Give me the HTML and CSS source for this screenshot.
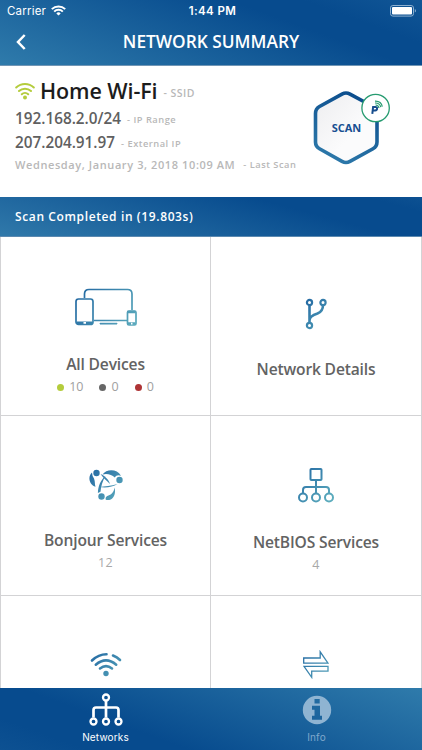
FILE: index.html
```
<!DOCTYPE html>
<html lang="en">
  <head>
    <meta charset="UTF-8" />
    <meta name="viewport" content="width=device-width, initial-scale=1.0" />
    <title>Network Summary</title>
    <link rel="stylesheet" href="styles.css">
  </head>
  <body>
    <!-- Shared icon gradient -->
    <svg class="defs" width="0" height="0">
      <defs>
        <linearGradient id="blue" x1="0" y1="0" x2="62" y2="40" gradientUnits="userSpaceOnUse">
          <stop offset="0" stop-color="#1f64a0" />
          <stop offset="1" stop-color="#5cacbd" />
        </linearGradient>
        <linearGradient id="blueSmall" x1="0" y1="0" x2="32" y2="32" gradientUnits="userSpaceOnUse">
          <stop offset="0" stop-color="#2267a2" />
          <stop offset="1" stop-color="#5cacbd" />
        </linearGradient>
        <linearGradient id="hex" x1="0.7" y1="0" x2="0.3" y2="1">
          <stop offset="0" stop-color="#0b4c8c" />
          <stop offset="1" stop-color="#2d79aa" />
        </linearGradient>
        <linearGradient id="hexFill" x1="0" y1="0" x2="1" y2="1">
          <stop offset="0" stop-color="#ededef" />
          <stop offset="0.6" stop-color="#fbfbfc" />
        </linearGradient>
      </defs>
    </svg>

    <header class="header">
      <div class="status">
        <div class="carrier">
          <span>Carrier</span>
          <svg width="15" height="11" viewBox="0 0 15 11" fill="none" stroke="#fff" stroke-width="2">
            <path d="M.8 4.1a9.6 9.6 0 0 1 13.4 0M3.2 6.6a6.1 6.1 0 0 1 8.6 0" />
            <path d="M7.5 10.6 5.3 8.4a3.2 3.2 0 0 1 4.4 0z" fill="#fff" stroke="none" />
          </svg>
        </div>
        <div class="clock">1:44 PM</div>
        <svg class="battery" width="26" height="12" viewBox="0 0 26 12">
          <rect x=".5" y=".5" width="23" height="10.6" rx="2.4" fill="none" stroke="#8db0d0" />
          <rect x="2" y="2" width="20" height="7.6" rx="1" fill="#fff" />
          <path d="M24.8 4v3.6q1.2-.6 1.2-1.8t-1.2-1.8z" fill="#8db0d0" />
        </svg>
      </div>
      <div class="navbar">
        <svg class="back" width="10" height="16" viewBox="0 0 10 16" fill="none" stroke="#fff" stroke-width="2.5">
          <path d="M8.7 1 2 8l6.7 7" />
        </svg>
        <h1>NETWORK SUMMARY</h1>
      </div>
    </header>

    <section class="summary">
      <div class="facts">
        <div class="ssid">
          <svg width="20" height="18" viewBox="0 0 20 18" fill="none" stroke="#b4cc3c" stroke-width="2" stroke-linecap="round">
            <path d="M1.2 5.5a12.8 12.8 0 0 1 17.6 0M4 9a8.8 8.8 0 0 1 12 0M6.8 12.3a4.7 4.7 0 0 1 6.4 0" />
            <circle cx="10" cy="15.5" r="2" fill="#b4cc3c" stroke="none" />
          </svg>
          <strong>Home Wi-Fi</strong>
          <small>- SSID</small>
        </div>
        <div class="address"><b>192.168.2.0/24</b><small>- IP Range</small></div>
        <div class="address"><b>207.204.91.97</b><small>- External IP</small></div>
        <div class="last-scan"><b>Wednesday, January 3, 2018 10:09 AM</b><small>- Last Scan</small></div>
      </div>
      <div class="scan">
        <svg width="78" height="74" viewBox="0 0 78 74">
          <path d="M29 3.1q4-2.2 8 0L60 15.500q4 2.300 4 7V51q0 4.500-4 6.800L37 70.400q-4 2.200-8 0L6.500 57.800q-4-2.300-4-6.800V22.500q0-4.700 4-7z" fill="url(#hexFill)" stroke="url(#hex)" stroke-width="3.600" />
          <circle cx="62.600" cy="17" r="13.700" fill="#fff" stroke="#269b70" stroke-width="1.300" />
          <path d="M59.300 22.800l.8-6.800h2q2-.2 2 1.500t-2 2h-2" fill="none" stroke="#174d8d" stroke-width="2" />
          <path d="M62.500 14q2.900-.2 3.500 3M62 12q4.800-.3 5.800 4.200M62 10.200q6.300-.2 7.300 5.500" fill="none" stroke="#269b70" stroke-width="1.200" />
        </svg>
        <span>SCAN</span>
      </div>
    </section>

    <div class="result">Scan Completed in (19.803s)</div>

    <main class="grid">
      <div class="cell devices">
        <svg width="62" height="38" viewBox="0 0 62 38" fill="none" stroke="url(#blue)" stroke-width="1.700">
          <path d="M9.500 10V6q0-4.500 4.500-4.500h38.500q4.500 0 4.500 4.500v16M19 32.500h33" />
          <rect x="1" y="11" width="17" height="25.500" rx="2.500" />
          <path d="M1.500 34.800h16M52.500 35.600h8M52.500 24h8" stroke-width="2.500" />
          <rect x="52.500" y="23" width="8.500" height="14" rx="1.500" />
          <path d="M25 35.300h17v.7H25z" fill="url(#blue)" stroke-width="1" />
          <path d="M8.500 34.800h2.500M56 35.600h1.500" stroke="#fff" />
        </svg>
        <h2>All Devices</h2>
        <div class="counts">
          <span><i class="dot online"></i>10</span>
          <span><i class="dot offline"></i>0</span>
          <span><i class="dot blocked"></i>0</span>
        </div>
      </div>

      <div class="cell details">
        <svg width="22" height="32" viewBox="0 0 22 32" fill="none" stroke="url(#blueSmall)" stroke-width="2.200">
          <circle cx="4.500" cy="4.500" r="2.600" />
          <circle cx="18" cy="4.500" r="2.600" />
          <circle cx="4.500" cy="27.500" r="2.600" />
          <path d="M4.500 7v18M18 7.200q0 6-5.500 8.300-8 2.500-8 7" stroke-width="2.600" />
        </svg>
        <h2>Network Details</h2>
      </div>

      <div class="cell bonjour">
        <svg width="34" height="32" viewBox="0 0 34 32" fill="url(#blueSmall)">
          <circle cx="7.500" cy="4" r="3.200" />
          <circle cx="30.500" cy="11" r="3.200" />
          <circle cx="12.500" cy="27.500" r="3.200" />
          <path d="M3 3.500C-1.500 7.500 0 15.500 6.500 17.800 5.500 15.200 6.300 12.500 5 9.500Q3.200 7.500 3 3.500z" />
          <path d="M13.500 5.500C17.500-.3 28-.5 32 6.800c-3-1.200-4.800-.5-6.200 1.700-3-2.800-7.800-4.500-12.300-3z" />
          <path d="M25.500 18.500c-.5 4.500-3 7-6 8-2.400.8-3.300 2.200-2.700 4.300C23.500 32.500 27.500 25.500 25.500 18.500z" />
          <path d="M11.500 5C16 7 20 11 21 15 18 11.500 14.500 9.800 11.500 5z" />
          <path d="M28.500 15C24 18.200 16.500 19 10.500 18c5-1 11.500-1 18-3z" />
          <path d="M8.900 24C9 17.500 11.500 11 16.500 7c-3 5-4.500 10.500-5 15.800z" />
        </svg>
        <h2>Bonjour Services</h2>
        <p>12</p>
      </div>

      <div class="cell netbios">
        <svg width="36" height="35" viewBox="0 0 36 35" fill="none" stroke="url(#blueSmall)" stroke-width="2">
          <rect x="12.500" y="1" width="11" height="11" rx=".8" />
          <path d="M18 12v13M5 25v-3q0-3 3-3h20q3 0 3 3v3" />
          <circle cx="5" cy="29.500" r="4" />
          <circle cx="18" cy="29.500" r="4" />
          <circle cx="31" cy="29.500" r="4" />
        </svg>
        <h2>NetBIOS Services</h2>
        <p>4</p>
      </div>

      <div class="cell wifi">
        <svg width="32" height="26" viewBox="0 0 32 26" fill="none" stroke="url(#blueSmall)" stroke-width="2.600" stroke-linecap="round">
          <path d="M2 8.500Q8.500 2.200 16.500 2.200M23 3.500q4 1.500 7 4.500M5.800 12.700q10.200-8.600 20.400 0M10 16.500q6-4.600 12 0" />
          <circle cx="16" cy="21.500" r="2.700" fill="url(#blueSmall)" stroke="none" />
        </svg>
      </div>

      <div class="cell transfer">
        <svg width="26" height="29" viewBox="0 0 26 29" fill="none" stroke="url(#blueSmall)" stroke-width="1.300">
          <path d="M.7 8h16.500V1.800L25 13.200H.7zM25 16.300H1l7.700 11v-6.200H25z" />
        </svg>
      </div>
    </main>

    <nav class="tabbar">
      <div class="tab active">
        <svg width="34" height="33" viewBox="0 0 34 33" fill="none" stroke="#fff" stroke-width="2.300">
          <circle cx="17" cy="4.500" r="3" />
          <path d="M17 8v16.500M4.500 24.500V17q0-2.500 2.500-2.500h20q2.500 0 2.500 2.500v7.500" stroke-width="2.700" />
          <circle cx="4.500" cy="28.500" r="3" />
          <circle cx="17" cy="28.500" r="3" />
          <circle cx="29.500" cy="28.500" r="3" />
        </svg>
        <span>Networks</span>
      </div>
      <div class="tab">
        <svg width="30" height="30" viewBox="0 0 30 30">
          <path fill="#8fb4d2" fill-rule="evenodd" d="M15 .8a14.200 14.200 0 1 0 0 28.400 14.200 14.200 0 0 0 0-28.400zM12.500 4h5.200v4.500h-5.200zM10 10.700h8v10h2v4H10v-4h2.500v-6H10z" />
        </svg>
        <span>Info</span>
      </div>
    </nav>
  </body>
</html>
```

FILE: styles.css
```
* {
  box-sizing: border-box;
}

body {
  margin: 0;
  height: 750px;
  display: flex;
  flex-direction: column;
  overflow: hidden;
  background: #fff;
  font-family: "Open Sans", sans-serif;
}

svg {
  display: block;
  flex: none;
}

.defs {
  position: absolute;
}

h1,
h2,
p {
  margin: 0;
}

.header {
  height: 66px;
  flex: none;
  color: #fff;
  background: linear-gradient(20deg, #2f7bab 0%, #074b8e 68%, #074b8e 80%, #115696 100%);
  border-bottom: 1px solid #7196b5;
}

.status {
  height: 21px;
  display: grid;
  grid-template-columns: 1fr auto 1fr;
  align-items: center;
  padding: 0 6px 0 7px;
  font-family: Inter, sans-serif;
  font-size: 11.5px;
}

.carrier {
  display: flex;
  align-items: center;
  gap: 5px;
  letter-spacing: 0.2px;
}

.clock {
  padding-left: 2px;
  font-weight: 600;
  letter-spacing: 0.4px;
}

.battery {
  justify-self: end;
}

.navbar {
  position: relative;
  height: 42px;
  display: flex;
  align-items: center;
  justify-content: center;
}

.back {
  position: absolute;
  left: 16px;
  top: 13px;
}

h1 {
  font-size: 17.3px;
  font-weight: 600;
  letter-spacing: 0;
  line-height: 24px;
  margin-top: -1px;
}

.summary {
  height: 131px;
  flex: none;
  display: flex;
  padding: 10px 0 0 15px;
}

.facts {
  width: 298px;
  white-space: nowrap;
  color: #606060;
}

.facts b {
  font-weight: 600;
}

.facts small {
  font-size: 9.3px;
  font-weight: 600;
  letter-spacing: 0.5px;
  color: #b8b8b8;
}

.ssid {
  height: 30px;
  display: flex;
  align-items: center;
}

.ssid strong {
  margin: -1px 6px 0 5px;
  font-size: 21.5px;
  font-weight: 600;
  letter-spacing: -0.1px;
  color: #1c1c1c;
}

.facts .ssid small {
  font-size: 10.5px;
  padding-top: 3px;
}

.address {
  height: 24px;
  display: flex;
  align-items: center;
  gap: 6px;
  font-size: 15.3px;
}

.address small {
  padding-top: 2px;
}

.last-scan {
  height: 20px;
  display: flex;
  align-items: center;
  gap: 8px;
  font-size: 11px;
  letter-spacing: 0.6px;
  color: #b8b8b8;
}

.scan {
  position: relative;
  margin-top: 15px;
  height: 74px;
}

.scan span {
  position: absolute;
  left: 0;
  top: 29px;
  width: 67px;
  text-align: center;
  font-size: 11px;
  font-weight: 700;
  line-height: 16px;
  color: #174f91;
}

.result {
  height: 40px;
  flex: none;
  padding-left: 15px;
  line-height: 39px;
  font-size: 12px;
  font-weight: 600;
  letter-spacing: 0.62px;
  color: #fff;
  background: linear-gradient(15deg, #3079aa 0%, #074b8e 70%, #074b8e 90%, #0d5192 100%);
  border-bottom: 1px solid #5b89b0;
}

.grid {
  flex: 1;
  min-height: 0;
  display: grid;
  grid-template-columns: 210px 1fr;
  grid-template-rows: 179px 180px 180px;
  overflow: hidden;
  border-left: 1px solid #d3d3d5;
}

.cell {
  display: flex;
  flex-direction: column;
  align-items: center;
  border-right: 1px solid #d3d3d5;
  border-bottom: 1px solid #d3d3d5;
}

h2 {
  font-size: 15.6px;
  font-weight: 600;
  letter-spacing: -0.16px;
  line-height: 22px;
  color: #636363;
}

.cell p {
  font-size: 12.5px;
  line-height: 18px;
  letter-spacing: 0.3px;
  color: #a8a8a8;
}

.devices svg {
  margin: 51px 0 27px;
}

.counts {
  display: flex;
  gap: 16px;
  margin-top: 3px;
  font-size: 12.5px;
  line-height: 18px;
  color: #a0a0a0;
}

.counts span {
  display: flex;
  align-items: center;
  gap: 5px;
}

.dot {
  width: 7px;
  height: 7px;
  border-radius: 50%;
}

.online {
  background: #b4cc3c;
}

.offline {
  background: #666;
}

.blocked {
  background: #ae3436;
}

.details svg {
  margin: 61px 0 28px;
}

.bonjour svg {
  margin: 53px 0 28px;
}

.bonjour p,
.netbios p {
  margin-top: 3px;
}

.netbios svg {
  margin: 52px 0 28px;
}

.wifi svg {
  margin-top: 56px;
}

.transfer svg {
  margin-top: 54px;
}

.tabbar {
  height: 62px;
  flex: none;
  display: flex;
  color: #fff;
  background: linear-gradient(200deg, #2f7bab 0%, #074b8e 68%, #074b8e 85%, #0d5192 100%);
}

.tab {
  flex: 1;
  display: flex;
  flex-direction: column;
  align-items: center;
  justify-content: space-between;
  padding: 7px 0 6px;
  font-family: Inter, sans-serif;
  font-size: 10px;
  line-height: 14px;
  letter-spacing: 0.15px;
  color: #7fa8cc;
}

.tab.active {
  padding-top: 5px;
  color: #fff;
}
```
